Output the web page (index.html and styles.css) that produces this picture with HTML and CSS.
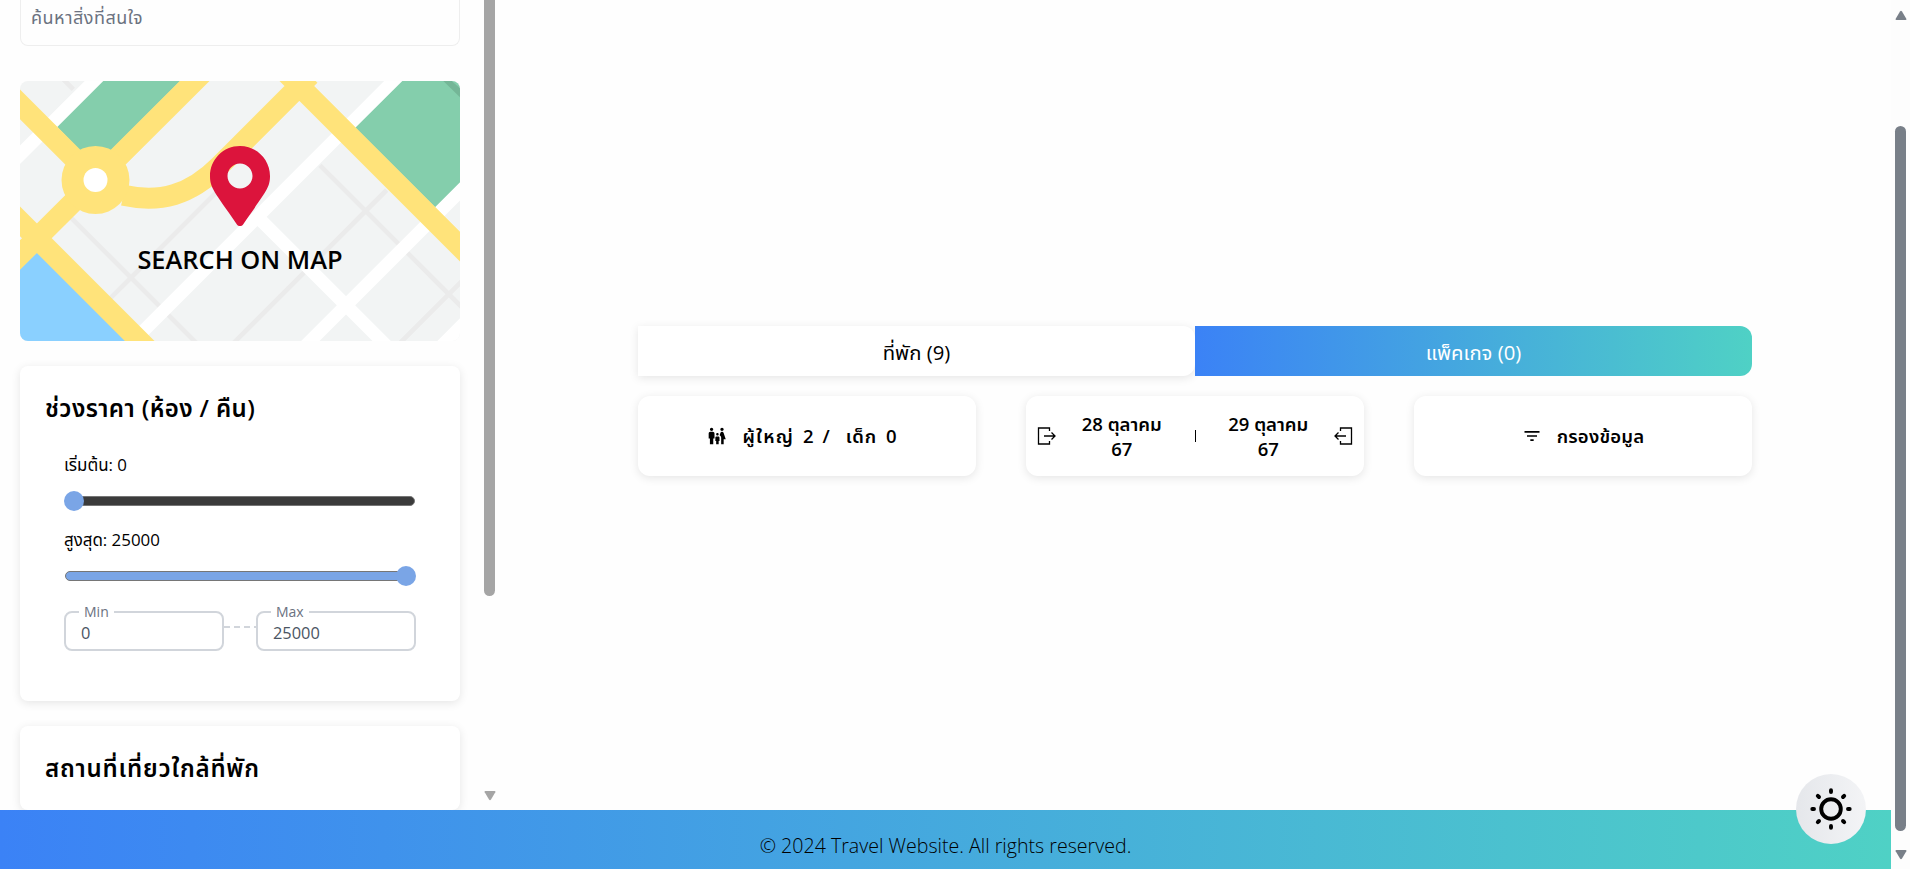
FILE: index.html
```html
<!DOCTYPE html>
<html lang="th">
<head>
<meta charset="utf-8">
<title>Travel Website</title>
<link rel="stylesheet" href="styles.css">
</head>
<body>
<div class="window">
  <div class="page">
    <div class="columns">
      <aside class="sidebar">
        <div class="sidebar-content">
          <div class="search"><span class="search-text">ค้นหาสิ่งที่สนใจ</span></div>
          <div class="map">
            <svg class="map-art" viewBox="60 243 1320 780" fill="none">
              <path fill="#f2f4f4" d="M60 243h1320v780H60z"/>
              <g stroke="#ebebeb" stroke-width="14">
                <path d="M180 228l40 40M200 640l420 420M660 566l-330 330M960 496l450 450M1160 570l-480 480M1400 829l-210 210"/>
              </g>
              <g stroke="#fff" stroke-width="39">
                <path d="M30 494l272-271M1450-27L400 1023M1430 524L900 1054M786 664l400 400"/>
              </g>
              <path fill="#fff" d="M1380 955v68h-68z"/>
              <path fill="#84ceac" d="M310 243h231L332 452h-92l-68-71zM1207 243h173v304l-75 75-239-239z"/>
              <path fill="#74b697" d="M1330 243h25l25 22v27z"/>
              <path fill="#8ad0ff" d="M60 808l52-52 267 267H60z"/>
              <g stroke="#ffe37a" stroke-width="63">
                <path d="M30 283l257 257M614 213L30 795M30 634l420 420M860 220l560 560M370 586C480 610 570 586 660 496L930 226"/>
              </g>
              <circle cx="286.500" cy="540" r="102" fill="#ffe37a"/>
              <circle cx="286.500" cy="540" r="36" fill="#fff"/>
              <path fill="#dc143c" transform="translate(630 438) scale(.46875)" d="M172.268 501.67C26.97 291.031 0 269.413 0 192 0 85.961 85.961 0 192 0s192 85.961 192 192c0 77.413-26.97 99.031-172.268 309.67-9.535 13.774-29.93 13.773-39.464 0zM192 272c44.183 0 80-35.817 80-80s-35.817-80-80-80-80 35.817-80 80 35.817 80 80 80z"/>
            </svg>
            <span class="map-label">SEARCH ON MAP</span>
          </div>
          <section class="panel price">
            <h2 class="panel-title">ช่วงราคา (ห้อง / คืน)</h2>
            <div class="price-body">
              <p class="range-label">เริ่มต้น: 0</p>
              <div class="range range-min"><span class="range-track"></span><span class="thumb"></span></div>
              <p class="range-label">สูงสุด: 25000</p>
              <div class="range range-max"><span class="range-track"></span><span class="thumb"></span></div>
              <div class="fields">
                <div class="field"><span class="field-label">Min</span><span class="field-value">0</span></div>
                <span class="dash"></span>
                <div class="field"><span class="field-label">Max</span><span class="field-value">25000</span></div>
              </div>
            </div>
          </section>
          <section class="panel nearby"><h2 class="panel-title nearby-title">สถานที่เที่ยวใกล้ที่พัก</h2></section>
        </div>
        <div class="side-scroll">
          <span class="side-bar"></span>
          <svg class="arrow side-arrow" viewBox="0 0 12 10"><path d="M1.500 0h9q1.500 0 .8 1.200L7 8.500q-1 1.300-2 0L.7 1.200Q0 0 1.500 0z"/></svg>
        </div>
      </aside>
      <main class="main">
        <div class="tabs">
          <div class="tab tab-left">ที่พัก (9)</div>
          <div class="tab tab-right">แพ็คเกจ (0)</div>
        </div>
        <div class="filters">
          <div class="card">
            <svg class="icon" viewBox="0 0 24 24"><path d="M16 4c0-1.110.89-2 2-2s2 .89 2 2-.89 2-2 2-2-.89-2-2zm4 18v-6h2.500l-2.540-7.630A2.010 2.010 0 0 0 18.060 7h-.12a2 2 0 0 0-1.900 1.370l-.86 2.580c1.080.6 1.820 1.730 1.820 3.050v8h3zm-7.500-10.500c.83 0 1.500-.67 1.500-1.500s-.67-1.500-1.500-1.500S11 9.170 11 10s.67 1.500 1.500 1.500zM5.500 6c1.110 0 2-.89 2-2s-.89-2-2-2-2 .89-2 2 .89 2 2 2zm2 16v-7H9V9c0-1.100-.9-2-2-2H4c-1.100 0-2 .9-2 2v6h1.500v7h4zm6.500 0v-4h1v-4c0-.82-.68-1.500-1.500-1.500h-2c-.82 0-1.500.68-1.500 1.500v4h1v4h3z"/></svg>
            <span class="guests"><span class="adults">ผู้ใหญ่</span><span>2</span><span>/</span><span class="kids">เด็ก</span><span>0</span></span>
          </div>
          <div class="card dates">
            <svg class="icon line" viewBox="0 0 20 20"><path d="M12.500 5V2h-11v16h11v-3M7 10h11M14.500 6.500L18 10l-3.500 3.500"/></svg>
            <span class="date">28 ตุลาคม<br>67</span>
            <span class="sep"></span>
            <span class="date">29 ตุลาคม<br>67</span>
            <svg class="icon line" viewBox="0 0 20 20"><path d="M7.500 5V2h11v16h-11v-3M13 10H2M5.500 6.500L2 10l3.500 3.500"/></svg>
          </div>
          <div class="card filter">
            <svg class="icon" viewBox="0 0 24 24"><path d="M10 18h4v-2h-4v2zM3 6v2h18V6H3zm3 7h12v-2H6v2z"/></svg>
            <span class="filter-text">กรองข้อมูล</span>
          </div>
        </div>
      </main>
    </div>
    <footer class="footer"><span class="copyright">© 2024 Travel Website. All rights reserved.</span></footer>
    <div class="theme">
      <svg class="sun" viewBox="-24 -24 48 48"><circle r="9.800"/><path d="M0-18.700v1.700M0 18.700V17M-18.700 0h1.700M18.700 0H17M-13.200-13.200l1.200 1.200M13.200-13.200L12-12M-13.200 13.200L-12 12M13.200 13.200L12 12"/></svg>
    </div>
  </div>
  <div class="page-scroll">
    <svg class="arrow" viewBox="0 0 12 10"><path d="M1.500 10h9q1.500 0 .8-1.200L7 1.500Q6 .2 5 1.500L.7 8.800Q0 10 1.500 10z"/></svg>
    <span class="page-bar"></span>
    <svg class="arrow" viewBox="0 0 12 10"><path d="M1.500 0h9q1.500 0 .8 1.200L7 8.500q-1 1.300-2 0L.7 1.200Q0 0 1.500 0z"/></svg>
  </div>
</div>
</body>
</html>
```
FILE: styles.css
```css
* { box-sizing: border-box; }
body { margin: 0; font-family: "Open Sans", "Noto Sans", "Noto Sans Thai", sans-serif; color: #000; background: #fefefe; overflow: hidden; }
h2, p { margin: 0; }
.window { display: flex; width: 1910px; height: 869px; }
.page { position: relative; width: 1891px; display: flex; flex-direction: column; }
.columns { display: flex; height: 810px; overflow: hidden; }
.sidebar { width: 500px; display: flex; }
.sidebar-content { width: 480px; padding: 0 20px; }
.search { height: 46px; border: 1px solid #eee; border-top: 0; border-radius: 0 0 8px 8px; padding: 5px 10px; color: #6b7280; font-size: 18px; letter-spacing: .5px; line-height: 24px; white-space: nowrap; }
.map { position: relative; margin-top: 35px; height: 260px; border-radius: 8px; overflow: hidden; }
.map-art { display: block; width: 440px; height: 260px; }
.map-label { position: absolute; left: 0; right: 0; top: 161px; text-align: center; font-size: 25.4px; line-height: 34px; font-weight: 600; white-space: nowrap; }
.panel { margin-top: 25px; border-radius: 8px; background: #fff; box-shadow: 0 2px 10px rgba(0, 0, 0, .1); padding: 24px 25px; }
.price { height: 335px; }
.panel-title { font-size: 24px; line-height: 36px; font-weight: 600; letter-spacing: .4px; white-space: nowrap; }
.nearby-title { letter-spacing: .8px; }
.price-body { padding: 24px 19px 0; }
.range-label { font-size: 16.9px; line-height: 30px; font-weight: 400; white-space: nowrap; }
.range { position: relative; height: 20px; margin: 11px 0 14px; padding: 5px 1px; }
.range-track { display: block; height: 10px; border: 1px solid #767676; border-radius: 5px; background: #3b3b3b; }
.range-max .range-track { background: #7aa5e6; }
.thumb { position: absolute; top: 0; left: 0; width: 20px; height: 20px; border-radius: 50%; background: #7aa5e6; }
.range-max .thumb { left: auto; right: 0; }
.fields { display: flex; align-items: center; padding-top: 11px; }
.field { position: relative; width: 160px; height: 40px; border: 2px solid #d1d5db; border-radius: 8px; padding: 8px 15px; color: #4b5563; }
.field-label { position: absolute; left: 13px; top: -11px; padding: 0 5px; background: #fff; color: #6b7280; font-size: 14px; line-height: 20px; font-weight: 400; }
.field-value { display: block; font-size: 16.4px; line-height: 24px; font-weight: 400; }
.dash { flex: 1; height: 2px; margin-top: -8px; background: repeating-linear-gradient(90deg, #d1d5db 0 6px, transparent 6px 10px); }
.side-scroll { width: 20px; display: flex; flex-direction: column; justify-content: space-between; padding: 0 5px 9px 4px; }
.side-bar { height: 596px; width: 11px; border-radius: 0 0 6px 6px; background: #a5a5a5; }
.arrow { width: 12px; height: 10px; fill: #787f88; }
.side-arrow { fill: #a5a5a5; }
.main { flex: 1; display: flex; flex-direction: column; align-items: center; padding: 326px 1px 0 0; }
.tabs { width: 1114px; display: flex; }
.tab { width: 557px; height: 50px; font-size: 20.3px; line-height: 52px; text-align: center; white-space: nowrap; }
.tab-left { background: #fff; border-radius: 0 12px 12px 0; box-shadow: 0 2px 10px rgba(0, 0, 0, .1); }
.tab-right { color: #fff; background: linear-gradient(90deg, #3b82f6, #4fd1c5); border-radius: 0 12px 12px 0; position: relative; }
.filters { width: 1114px; margin-top: 20px; display: flex; gap: 50px; }
.card { width: 338px; height: 80px; display: flex; align-items: center; justify-content: center; background: #fff; border-radius: 12px; box-shadow: 0 2px 10px rgba(0, 0, 0, .1); font-size: 18.5px; font-weight: 600; white-space: nowrap; }
.icon { width: 20px; height: 20px; flex: none; }
.line { fill: none; stroke: #000; stroke-width: 1.300; }
.guests { display: flex; gap: 9px; margin: 0 10px 0 15px; padding-top: 2px; }
.adults { letter-spacing: 1.2px; }
.kids { margin-left: 7px; letter-spacing: .8px; }
.dates { justify-content: space-between; padding: 0 11px; }
.date { line-height: 25px; text-align: center; }
.sep { width: 1px; height: 12px; margin: 0 8px; background: #000; }
.filter-text { margin-left: 15px; padding-top: 2px; letter-spacing: .2px; }
.footer { height: 59px; text-align: center; background: linear-gradient(90deg, #3b82f6, #4fd1c5); font-size: 19.6px; line-height: 72px; font-weight: 300; overflow: hidden; }
.theme { position: absolute; left: 1796px; top: 774px; width: 70px; height: 70px; border-radius: 50%; background: linear-gradient(90deg, #e5e7eb, #f3f4f6); display: flex; align-items: center; justify-content: center; }
.sun { width: 48px; height: 48px; fill: none; stroke: #000; stroke-width: 3.900; stroke-linecap: round; }
.page-scroll { width: 19px; display: flex; flex-direction: column; align-items: center; padding: 10px 0 9px; background: #fdfdfd; }
.page-bar { width: 11px; height: 705px; margin: 106px 0 19px; border-radius: 6px; background: #787f88; }
```
